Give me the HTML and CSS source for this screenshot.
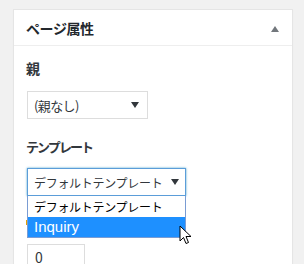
FILE: index.html
```html
<!DOCTYPE html>
<html lang="ja">

<head>
    <meta charset="UTF-8">
    <title>ページ属性</title>
    <link rel="stylesheet" href="styles.css">
</head>

<body>
    <div class="postbox">
        <div class="postbox-header">
            <h2>ページ属性</h2>
            <span class="toggle-arrow"></span>
        </div>

        <div class="inside">
            <p class="attr-label">親</p>
            <div class="select-box parent-select">
                <span>(親なし)</span>
                <span class="select-arrow"></span>
            </div>

            <p class="attr-label template-label">テンプレート</p>
            <div class="template-wrap">
                <div class="select-box template-select is-open">
                    <span>デフォルトテンプレート</span>
                    <span class="select-arrow"></span>
                </div>
                <ul class="dropdown">
                    <li>デフォルトテンプレート</li>
                    <li class="selected">Inquiry</li>
                </ul>
                <svg class="cursor" width="14" height="21" viewBox="0 0 14 21">
                    <path d="M1 1 L1 16 L4.5 12.5 L7 18.5 L9.5 17.5 L7 11.5 L12 11.5 Z" fill="#fff" stroke="#000" stroke-width="1" stroke-linejoin="round"/>
                </svg>
            </div>

            <div class="order-row">
                <span class="order-mark"></span>
            </div>
            <div class="number-input">0</div>
        </div>
    </div>
</body>

</html>
```

FILE: styles.css
```css
body {
    margin: 0;
    padding: 9px 0 0 13px;
    background-color: #f1f1f1;
    font-family: "Noto Sans CJK JP", "Liberation Sans", sans-serif;
    color: #23282d;
    height: 264px;
    overflow: hidden;
    box-sizing: border-box;
}

.postbox {
    width: 280px;
    height: 300px;
    box-sizing: border-box;
    background-color: #fff;
    border: 1px solid #e5e5e5;
    box-shadow: 0 1px 1px rgba(0, 0, 0, 0.04);
}

.postbox-header {
    display: flex;
    align-items: center;
    justify-content: space-between;
    height: 35px;
    padding: 0 13px 0 12px;
    border-bottom: 1px solid #eee;
}

.postbox-header h2 {
    margin: 0;
    font-size: 14px;
    font-weight: 700;
    line-height: 1;
    letter-spacing: -0.4px;
}

.toggle-arrow {
    width: 0;
    height: 0;
    border-left: 4px solid transparent;
    border-right: 4px solid transparent;
    border-bottom: 6px solid #72777c;
    margin-top: 2px;
}

.inside {
    padding: 0 12px;
}

.attr-label {
    margin: 12px 0 0;
    font-size: 14px;
    font-weight: 700;
    line-height: 20px;
    color: #32373c;
}

.template-label {
    margin-top: 18px;
    font-size: 13px;
    letter-spacing: -1.9px;
}

.select-box {
    display: flex;
    align-items: center;
    justify-content: space-between;
    box-sizing: border-box;
    height: 28px;
    margin-left: 1px;
    padding: 0 8px 0 6px;
    border: 1px solid #ddd;
    font-size: 13px;
    color: #32373c;
    background-color: #fff;
    white-space: nowrap;
}

.parent-select {
    width: 121px;
    margin-top: 13px;
    letter-spacing: -0.6px;
}

.template-wrap {
    position: relative;
    margin-top: 11px;
}

.template-select {
    width: 159px;
    padding-right: 6px;
    font-size: 12px;
    letter-spacing: -0.3px;
}

.template-select.is-open {
    border-color: #5b9dd9;
    box-shadow: 0 0 2px rgba(30, 140, 190, 0.8);
}

.select-arrow {
    width: 0;
    height: 0;
    border-left: 4px solid transparent;
    border-right: 4px solid transparent;
    border-top: 6px solid #32373c;
}

.dropdown {
    position: absolute;
    top: 28px;
    left: 1px;
    width: 159px;
    box-sizing: border-box;
    margin: 0;
    padding: 0;
    list-style: none;
    background-color: #fff;
    border: 1px solid #7a9cd3;
    border-top: none;
    font-size: 12px;
    letter-spacing: -0.3px;
    color: #000;
    white-space: nowrap;
    z-index: 2;
}

.dropdown li {
    height: 21px;
    line-height: 21px;
    padding-left: 6px;
}

.dropdown li.selected {
    height: 20px;
    line-height: 20px;
    background-color: #1e90ff;
    color: #fff;
    font-family: "Liberation Sans", sans-serif;
    font-size: 15px;
    letter-spacing: 0;
}

.cursor {
    position: absolute;
    left: 153px;
    top: 57px;
    z-index: 3;
}

.order-row {
    height: 20px;
    margin-top: 20px;
    padding-top: 4px;
    box-sizing: border-box;
}

.order-mark {
    display: block;
    width: 2px;
    height: 5px;
    background-color: #e2a000;
}

.number-input {
    width: 58px;
    height: 28px;
    box-sizing: border-box;
    margin: 8px 0 0 1px;
    padding: 2px 0 0 7px;
    border: 1px solid #ddd;
    font-size: 14px;
    line-height: 20px;
    color: #32373c;
}
```
